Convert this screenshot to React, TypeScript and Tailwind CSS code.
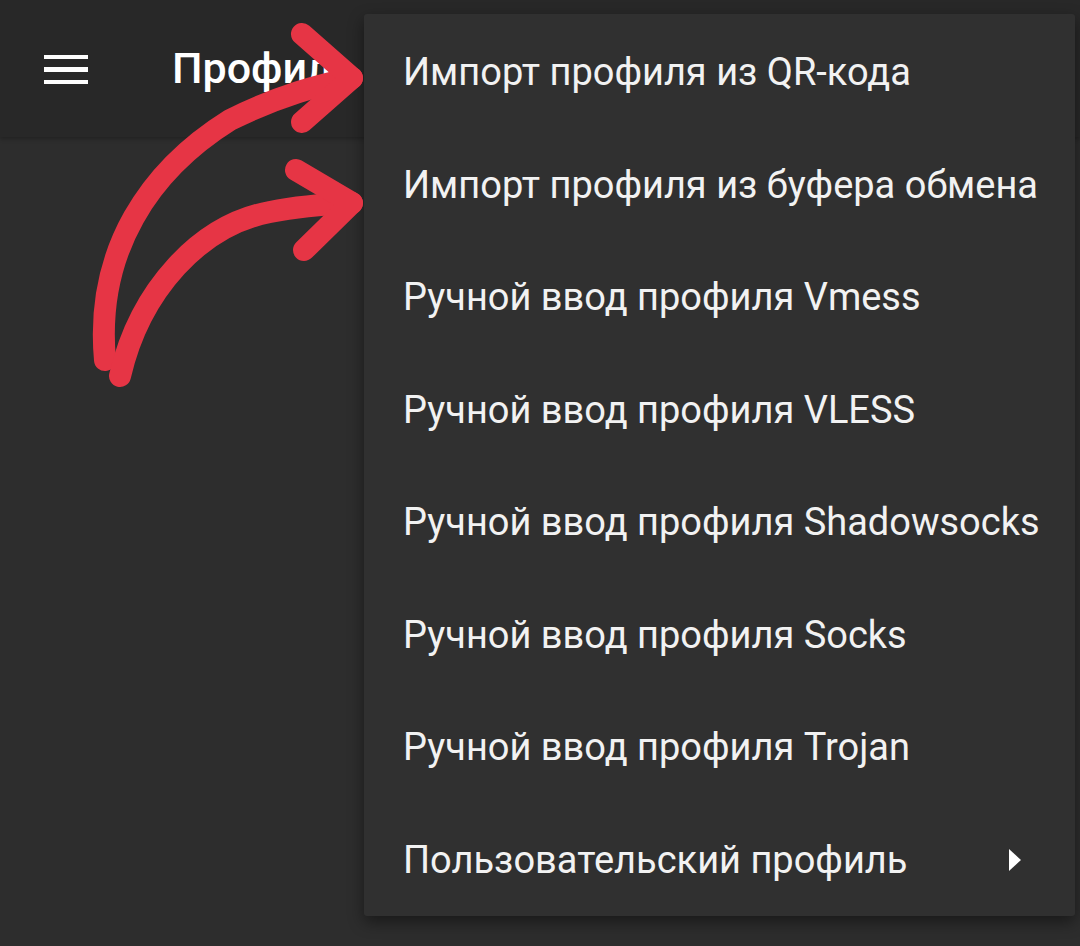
const items = [
  "Импорт профиля из QR-кода",
  "Импорт профиля из буфера обмена",
  "Ручной ввод профиля Vmess",
  "Ручной ввод профиля VLESS",
  "Ручной ввод профиля Shadowsocks",
  "Ручной ввод профиля Socks",
  "Ручной ввод профиля Trojan",
];

// hand-drawn red arrows on top of the screenshot
function Arrows() {
  return (
    <svg
      className="pointer-events-none absolute left-0 top-0"
      width="420"
      height="420"
      viewBox="0 0 420 420"
      fill="none"
      stroke="#e63545"
      strokeWidth="22"
      strokeLinecap="round"
      strokeLinejoin="round"
    >
      <path d="M105 360 C 95 250, 150 170, 230 120 C 280 95, 320 85, 352 78" />
      <path d="M302 34 L352 78 L302 122" />
      <path d="M120 376 C 140 290, 200 225, 270 212 C 300 206, 330 204, 352 203" />
      <path d="M296 170 L352 203 L304 250" />
    </svg>
  );
}

export default function App() {
  return (
    <div
      className="relative h-[946px] w-[1080px] overflow-hidden bg-[#2d2d2d] text-white"
      style={{ fontFamily: "Roboto, 'Noto Sans', sans-serif" }}
    >
      {/* App bar */}
      <div className="flex h-[137px] items-center bg-[#282828] shadow-[0_2px_4px_rgba(0,0,0,0.25)]">
        <div className="ml-[44px] flex w-[44px] flex-col gap-[8px] pt-[2px]">
          <span className="h-[4.5px] w-full bg-white" />
          <span className="h-[4.5px] w-full bg-white" />
          <span className="h-[4.5px] w-full bg-white" />
        </div>
        <h1 className="ml-[84px] text-[43px] font-medium leading-none">Профиль</h1>
      </div>

      {/* Popup menu */}
      <div className="absolute left-[364px] top-[14px] w-[711px] rounded-[3px] bg-[#303030] pt-[2px] shadow-[0_6px_16px_rgba(0,0,0,0.45)]">
        {items.map((label) => (
          <div key={label} className="flex h-[112.5px] items-center pl-[39px] text-[38px] leading-none text-[#f2f2f2]">
            {label}
          </div>
        ))}
        <div className="flex h-[112.5px] items-center justify-between pl-[39px] pr-[54px] text-[38px] leading-none text-[#f2f2f2]">
          <span>Пользовательский профиль</span>
          <svg width="12" height="22" viewBox="0 0 12 22">
            <path d="M0 0 L12 11 L0 22 Z" fill="#ffffff" />
          </svg>
        </div>
      </div>

      <Arrows />
    </div>
  );
}
